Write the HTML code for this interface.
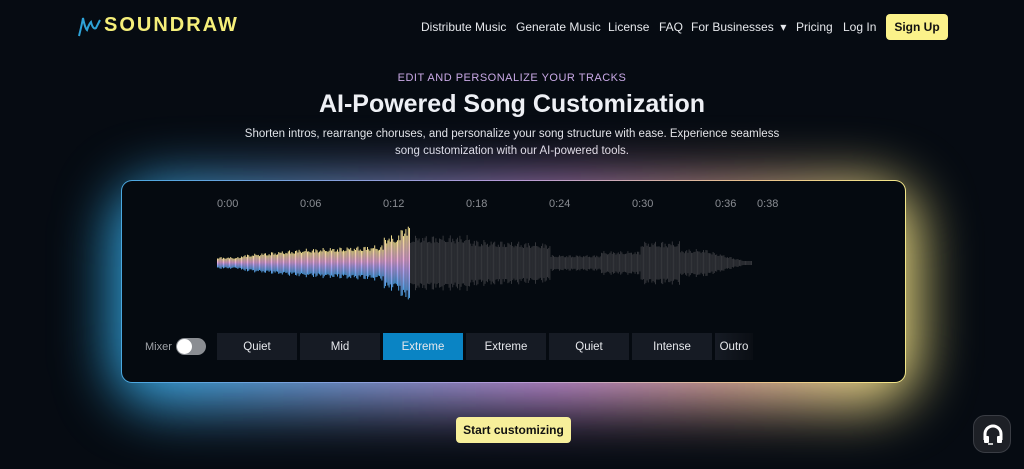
<!DOCTYPE html>
<html><head><meta charset="utf-8"><style>
*{margin:0;padding:0;box-sizing:border-box}
body{width:1024px;height:469px;overflow:hidden;background:#060b12;font-family:"Liberation Sans",sans-serif;color:#fff;position:relative}
.nav a{position:absolute;top:20px;font-size:12px;color:#e6e8ec}
.logo{position:absolute;left:80px;top:14px;font-size:20px;font-weight:bold;color:#f5ef7a;letter-spacing:2px}
.signup{position:absolute;left:886px;top:14px;width:62px;height:26px;background:#fbf28a;border-radius:4px;color:#111;font-size:12px;font-weight:bold;text-align:center;line-height:26px}
.eyebrow{position:absolute;top:72px;width:100%;text-align:center;font-size:11px;color:#c9a9e6;letter-spacing:.5px}
h1{position:absolute;top:90px;width:100%;text-align:center;font-size:25px;font-weight:bold;color:#eef0f5}
.sub{position:absolute;top:126px;left:238px;width:548px;text-align:center;font-size:11.5px;line-height:17px;color:#e4e6ea}
.glow{position:absolute;left:112px;top:182px;width:806px;height:225px;border-radius:50px;background:linear-gradient(90deg,#2aa6e0,#7f9ad8 30%,#c48cd4 55%,#d9a59a 75%,#f1e680);filter:blur(28px);opacity:1}
.card{position:absolute;left:122px;top:181px;width:783px;height:201px;border-radius:10px;background:#050a10}
.border{position:absolute;left:121px;top:180px;width:785px;height:203px;border-radius:11px;background:linear-gradient(90deg,#4aa8e0,#b79ad8 50%,#e8c08c 80%,#f3e788)}
.t{position:absolute;top:198px;font-size:11px;color:#8a8d93}
.seg{position:absolute;top:333px;height:27px;background:#161b24;color:#e6e8ec;font-size:11.5px;text-align:center;line-height:28px}
.btn{position:absolute;left:456px;top:417px;width:115px;height:26px;background:#f7ef9a;border-radius:4px;color:#111;font-size:12px;font-weight:bold;text-align:center;line-height:26px}
.help{position:absolute;left:973px;top:415px;width:38px;height:38px;border-radius:12px;background:#1d2026;border:1px solid #3a3d44}
</style></head><body>
<div class="logo"><svg width="24" height="24" viewBox="0 0 24 24" style="position:absolute;left:-2px;top:0px"><path d="M1 22 Q4 10 5 4 Q7 14 9 16 Q11 10 13 8 Q15 16 18 14 Q20 10 22 6" stroke="#2ea3d8" stroke-width="2" fill="none"/></svg><span style="margin-left:24px">SOUNDRAW</span></div>
<div class="nav">
<a style="left:421px">Distribute Music</a><a style="left:516px">Generate Music</a><a style="left:608px">License</a><a style="left:659px">FAQ</a><a style="left:691px">For Businesses &nbsp;▾</a><a style="left:796px">Pricing</a><a style="left:843px">Log In</a>
</div>
<div class="signup">Sign Up</div>
<div class="eyebrow">EDIT AND PERSONALIZE YOUR TRACKS</div>
<h1>AI-Powered Song Customization</h1>
<div class="sub">Shorten intros, rearrange choruses, and personalize your song structure with ease. Experience seamless song customization with our AI-powered tools.</div>
<div class="glow"></div>
<div class="border"></div>
<div class="card"></div>
<div class="t" style="left:217px">0:00</div><div class="t" style="left:300px">0:06</div><div class="t" style="left:383px">0:12</div><div class="t" style="left:466px">0:18</div><div class="t" style="left:549px">0:24</div><div class="t" style="left:632px">0:30</div><div class="t" style="left:715px">0:36</div><div class="t" style="left:757px">0:38</div>
<svg id="wf" style="position:absolute;left:0;top:0" width="1024" height="469">
<defs><linearGradient id="g" x1="0" y1="0" x2="0" y2="1"><stop offset="0" stop-color="#f0e08a"/><stop offset=".45" stop-color="#e6a8d8"/><stop offset=".6" stop-color="#b9a0ea"/><stop offset="1" stop-color="#4a9ee0"/></linearGradient></defs>
</svg>
<div style="position:absolute;left:145px;top:341px;font-size:11px;color:#a0a3a8">Mixer</div>
<div style="position:absolute;left:176px;top:338px;width:30px;height:17px;border-radius:9px;background:#8a8d92"><div style="position:absolute;left:1px;top:1px;width:15px;height:15px;border-radius:50%;background:#fff"></div></div>
<div class="seg" style="left:217px;width:80px">Quiet</div>
<div class="seg" style="left:300px;width:80px">Mid</div>
<div class="seg" style="left:383px;width:80px;background:#0a84c4">Extreme</div>
<div class="seg" style="left:466px;width:80px">Extreme</div>
<div class="seg" style="left:549px;width:80px">Quiet</div>
<div class="seg" style="left:632px;width:80px">Intense</div>
<div class="seg" style="left:715px;width:38px;background:linear-gradient(90deg,#161b24,#0a0e14)">Outro</div>
<div class="btn">Start customizing</div>
<div class="help"><svg width="38" height="38" viewBox="0 0 38 38"><path d="M11 24 V18 A8 8 0 0 1 27 18 V24" stroke="#fff" stroke-width="3" fill="none"/><rect x="10" y="20" width="5" height="7" rx="1" fill="#fff"/><rect x="23" y="20" width="5" height="7" rx="1" fill="#fff"/><path d="M14 28 H19" stroke="#fff" stroke-width="1.5"/></svg></div>
<script>
var s=document.getElementById('wf'),c=263,h='';
function amp(x){var a;
if(x<240)a=6;else if(x<300)a=8+(x-240)*0.1;else if(x<383)a=14+(x-300)*0.05;else if(x<410)a=28+(x>400?10:0);
else if(x<470)a=28;else if(x<550)a=24-(x-470)*0.05;else if(x<600)a=8;else if(x<640)a=12;else if(x<680)a=22;else if(x<710)a=14;else a=12*(752-x)/42;
return Math.max(2,a*(0.7+0.3*Math.abs(Math.sin(x*1.7)*Math.cos(x*0.37))));}
for(var x=217;x<752;x+=1.2){var a=amp(x);var col=x<410?'url(#g)':'#34363a';
h+='<rect x="'+x.toFixed(1)+'" y="'+(c-a).toFixed(1)+'" width="1" height="'+(2*a).toFixed(1)+'" fill="'+col+'"/>';}
s.insertAdjacentHTML('beforeend',h);
</script>
</body></html>
